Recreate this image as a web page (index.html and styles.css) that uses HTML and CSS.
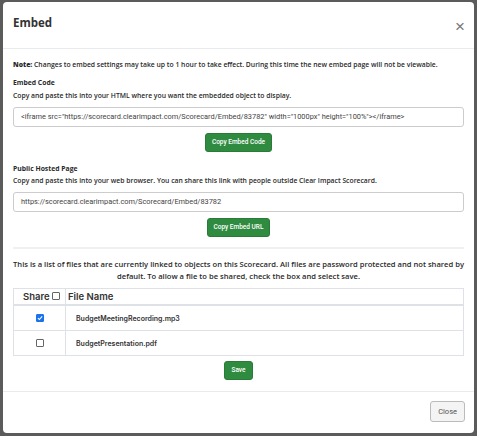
FILE: index.html
```html
<!DOCTYPE html>
<html>
<head>
<meta charset="utf-8">
<link rel="stylesheet" href="styles.css">
</head>
<body>
<div class="modal">
  <div class="modal-header">
    <h1 class="title">Embed</h1>
    <span class="close-x">&times;</span>
  </div>
  <div class="modal-body">
    <p class="note"><b>Note:</b> Changes to embed settings may take up to 1 hour to take effect. During this time the new embed page will not be viewable.</p>
    <div class="label">Embed Code</div>
    <div class="help">Copy and paste this into your HTML where you want the embedded object to display.</div>
    <div class="field">&lt;iframe src="https://scorecard.clearimpact.com/Scorecard/Embed/83782" width="1000px" height="100%"&gt;&lt;/iframe&gt;</div>
    <div class="btn-row"><span class="btn green">Copy Embed Code</span></div>
    <div class="label label2">Public Hosted Page</div>
    <div class="help">Copy and paste this into your web browser. You can share this link with people outside Clear Impact Scorecard.</div>
    <div class="field">https://scorecard.clearimpact.com/Scorecard/Embed/83782</div>
    <div class="btn-row"><span class="btn green">Copy Embed URL</span></div>
    <hr class="sep">
    <p class="files-info">This is a list of files that are currently linked to objects on this Scorecard. All files are password protected and not shared by default. To allow a file to be shared, check the box and select save.</p>
    <table class="files">
      <colgroup><col class="col-share"><col></colgroup>
      <thead>
        <tr><th class="c-share">Share<span class="cb"></span></th><th class="c-name">File Name</th></tr>
      </thead>
      <tbody>
        <tr><td class="c-share"><span class="cb checked"><svg viewBox="0 0 10 10" width="6" height="6"><path d="M1.5 5.2 L4 7.6 L8.6 2.4" fill="none" stroke="#fff" stroke-width="1.8"/></svg></span></td><td class="c-name">BudgetMeetingRecording.mp3</td></tr>
        <tr><td class="c-share"><span class="cb"></span></td><td class="c-name">BudgetPresentation.pdf</td></tr>
      </tbody>
    </table>
    <div class="btn-row save-row"><span class="btn green">Save</span></div>
  </div>
  <div class="modal-footer">
    <span class="btn close-btn">Close</span>
  </div>
</div>
</body>
</html>
```
FILE: styles.css
```css
html, body {
  margin: 0;
  padding: 0;
}
body {
  background: #5b5b5b;
  width: 477px;
  height: 436px;
  overflow: hidden;
  font-family: "Open Sans", "Liberation Sans", sans-serif;
  color: #333;
}
.modal {
  margin: 2px 3px;
  width: 471px;
  height: 431px;
  background: #fff;
  border-radius: 4px;
  display: flex;
  flex-direction: column;
}
.modal-header {
  height: 46px;
  border-bottom: 1px solid #e9ecef;
  display: flex;
  align-items: flex-start;
  justify-content: space-between;
  padding: 0 9px 0 10px;
}
.title {
  margin: 11px 0 0;
  font-size: 11.5px;
  font-weight: 700;
  color: #333;
  line-height: 20px;
}
.close-x {
  margin-top: 15px;
  font-size: 17px;
  line-height: 20px;
  color: #777;
  font-family: "Liberation Sans", sans-serif;
}
.modal-body {
  padding: 10px 10px 11px;
  font-size: 6.8px;
  font-weight: 600;
  color: #2a2a2a;
  border-bottom: 1px solid #e9ecef;
}
.note {
  margin: 0;
  line-height: 12px;
}
.label {
  margin-top: 6px;
  line-height: 12px;
  font-weight: 700;
}
.label2 {
  margin-top: 11px;
}
.help {
  line-height: 12px;
  margin-top: 1px;
}
.label2 + .help {
  margin-top: 0;
}
.field {
  margin-top: 5px;
  height: 18px;
  border: 1px solid #ccc;
  border-radius: 3px;
  padding: 0 7px;
  line-height: 18px;
  font-size: 7.4px;
  font-weight: 400;
  font-family: "Roboto", "Liberation Sans", sans-serif;
  color: #444;
  white-space: nowrap;
  overflow: hidden;
}
.btn-row {
  display: flex;
  justify-content: center;
  margin-top: 6px;
}
.btn {
  display: inline-block;
  border-radius: 3px;
  font-family: "Roboto", "Liberation Sans", sans-serif;
  font-size: 6.5px;
  font-weight: 500;
  padding: 0 6px;
}
.green {
  background: #2e8b40;
  color: #fff;
  border: 1px solid #2a7a38;
  height: 17px;
  line-height: 17px;
}
.sep {
  margin: 10px 0 0;
  border: 0;
  border-top: 2px solid #eef0f2;
}
.files-info {
  margin: 9px 0 0;
  text-align: center;
  line-height: 12px;
  font-size: 7.6px;
}
.files {
  margin-top: 6px;
  width: 100%;
  table-layout: fixed;
  border-collapse: collapse;
  border: 1px solid #dee2e6;
}
.col-share {
  width: 52px;
}
.files th, .files td {
  border: 1px solid #dee2e6;
  padding: 0;
  text-align: left;
}
.files th {
  height: 15px;
  font-family: "Inter", "Liberation Sans", sans-serif;
  font-size: 9.5px;
  font-weight: 600;
  color: #333;
  border-bottom-width: 2px;
}
.files td {
  height: 24px;
  font-family: "Inter", "Liberation Sans", sans-serif;
  font-size: 7px;
  font-weight: 600;
  color: #333;
}
td.c-share {
  text-align: center;
}
th.c-share {
  padding-left: 9px;
}
th.c-name {
  padding-left: 2px;
}
td.c-name {
  padding-left: 10px;
}
.cb {
  display: inline-block;
  width: 6px;
  height: 6px;
  border: 1px solid #666;
  border-radius: 1px;
  background: #fff;
  vertical-align: middle;
  margin-left: 2px;
  position: relative;
  top: -1px;
}
td .cb {
  margin-left: 0;
}
.cb.checked {
  background: #1a73e8;
  border-color: #1a73e8;
}
.cb svg {
  display: block;
}
.save-row {
  margin-top: 5px;
}
.modal-footer {
  flex: 1;
  display: flex;
  justify-content: flex-end;
  align-items: flex-start;
  padding: 9px 9px 0;
}
.close-btn {
  border: 1px solid #bbb;
  background: #f4f4f4;
  color: #555;
  height: 19px;
  line-height: 19px;
  padding: 0 7px;
  font-size: 7.5px;
  font-weight: 400;
}
```
